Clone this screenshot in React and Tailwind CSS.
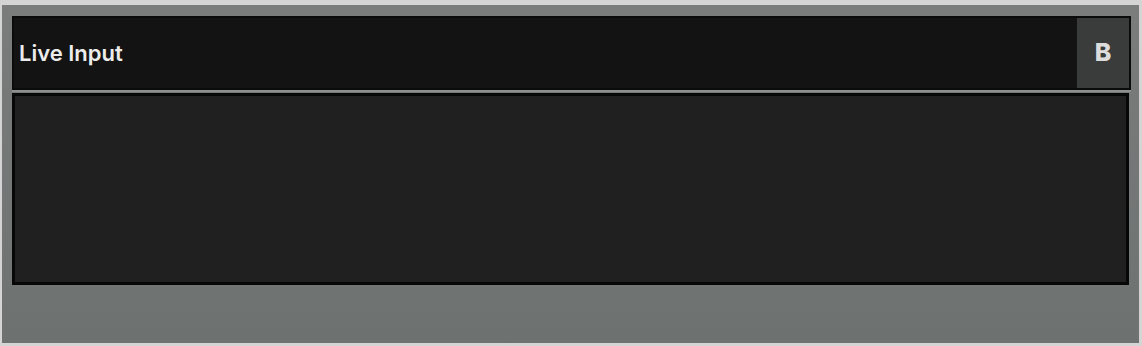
import React from 'react';

// Panel "Live Input" con botón B y área de contenido vacía.
const App = () => {
  return (
    <div
      className="w-[1142px] h-[346px] bg-[#d4d4d4] pt-[5px] pl-[2px] pr-[3px] pb-[3px]"
      style={{ fontFamily: 'Inter, "Noto Sans", sans-serif' }}
    >
      <div className="h-full bg-gradient-to-b from-[#7b7c7c] to-[#6d7271] pt-[11px] pl-[10px] pr-[8px] flex flex-col">
        {/* Cabecera */}
        <div className="h-[74px] flex items-stretch bg-[#131313] border-2 border-[#0b0b0b]">
          <div className="flex-1 flex items-center pl-[5px]">
            <span className="text-[22px] font-semibold text-[#ececec]">Live Input</span>
          </div>
          <button className="w-[52px] bg-[#3a3b3b] flex items-center justify-center text-[25px] font-extrabold text-[#dcdcdc]">
            B
          </button>
        </div>
        {/* Separador */}
        <div className="h-[2px] bg-[#8e8f8f]" />
        {/* Contenido */}
        <div className="mt-[1px] h-[192px] bg-[#202020] border-[3px] border-[#070707] mr-[2px]" />
      </div>
    </div>
  );
};

export default App;
